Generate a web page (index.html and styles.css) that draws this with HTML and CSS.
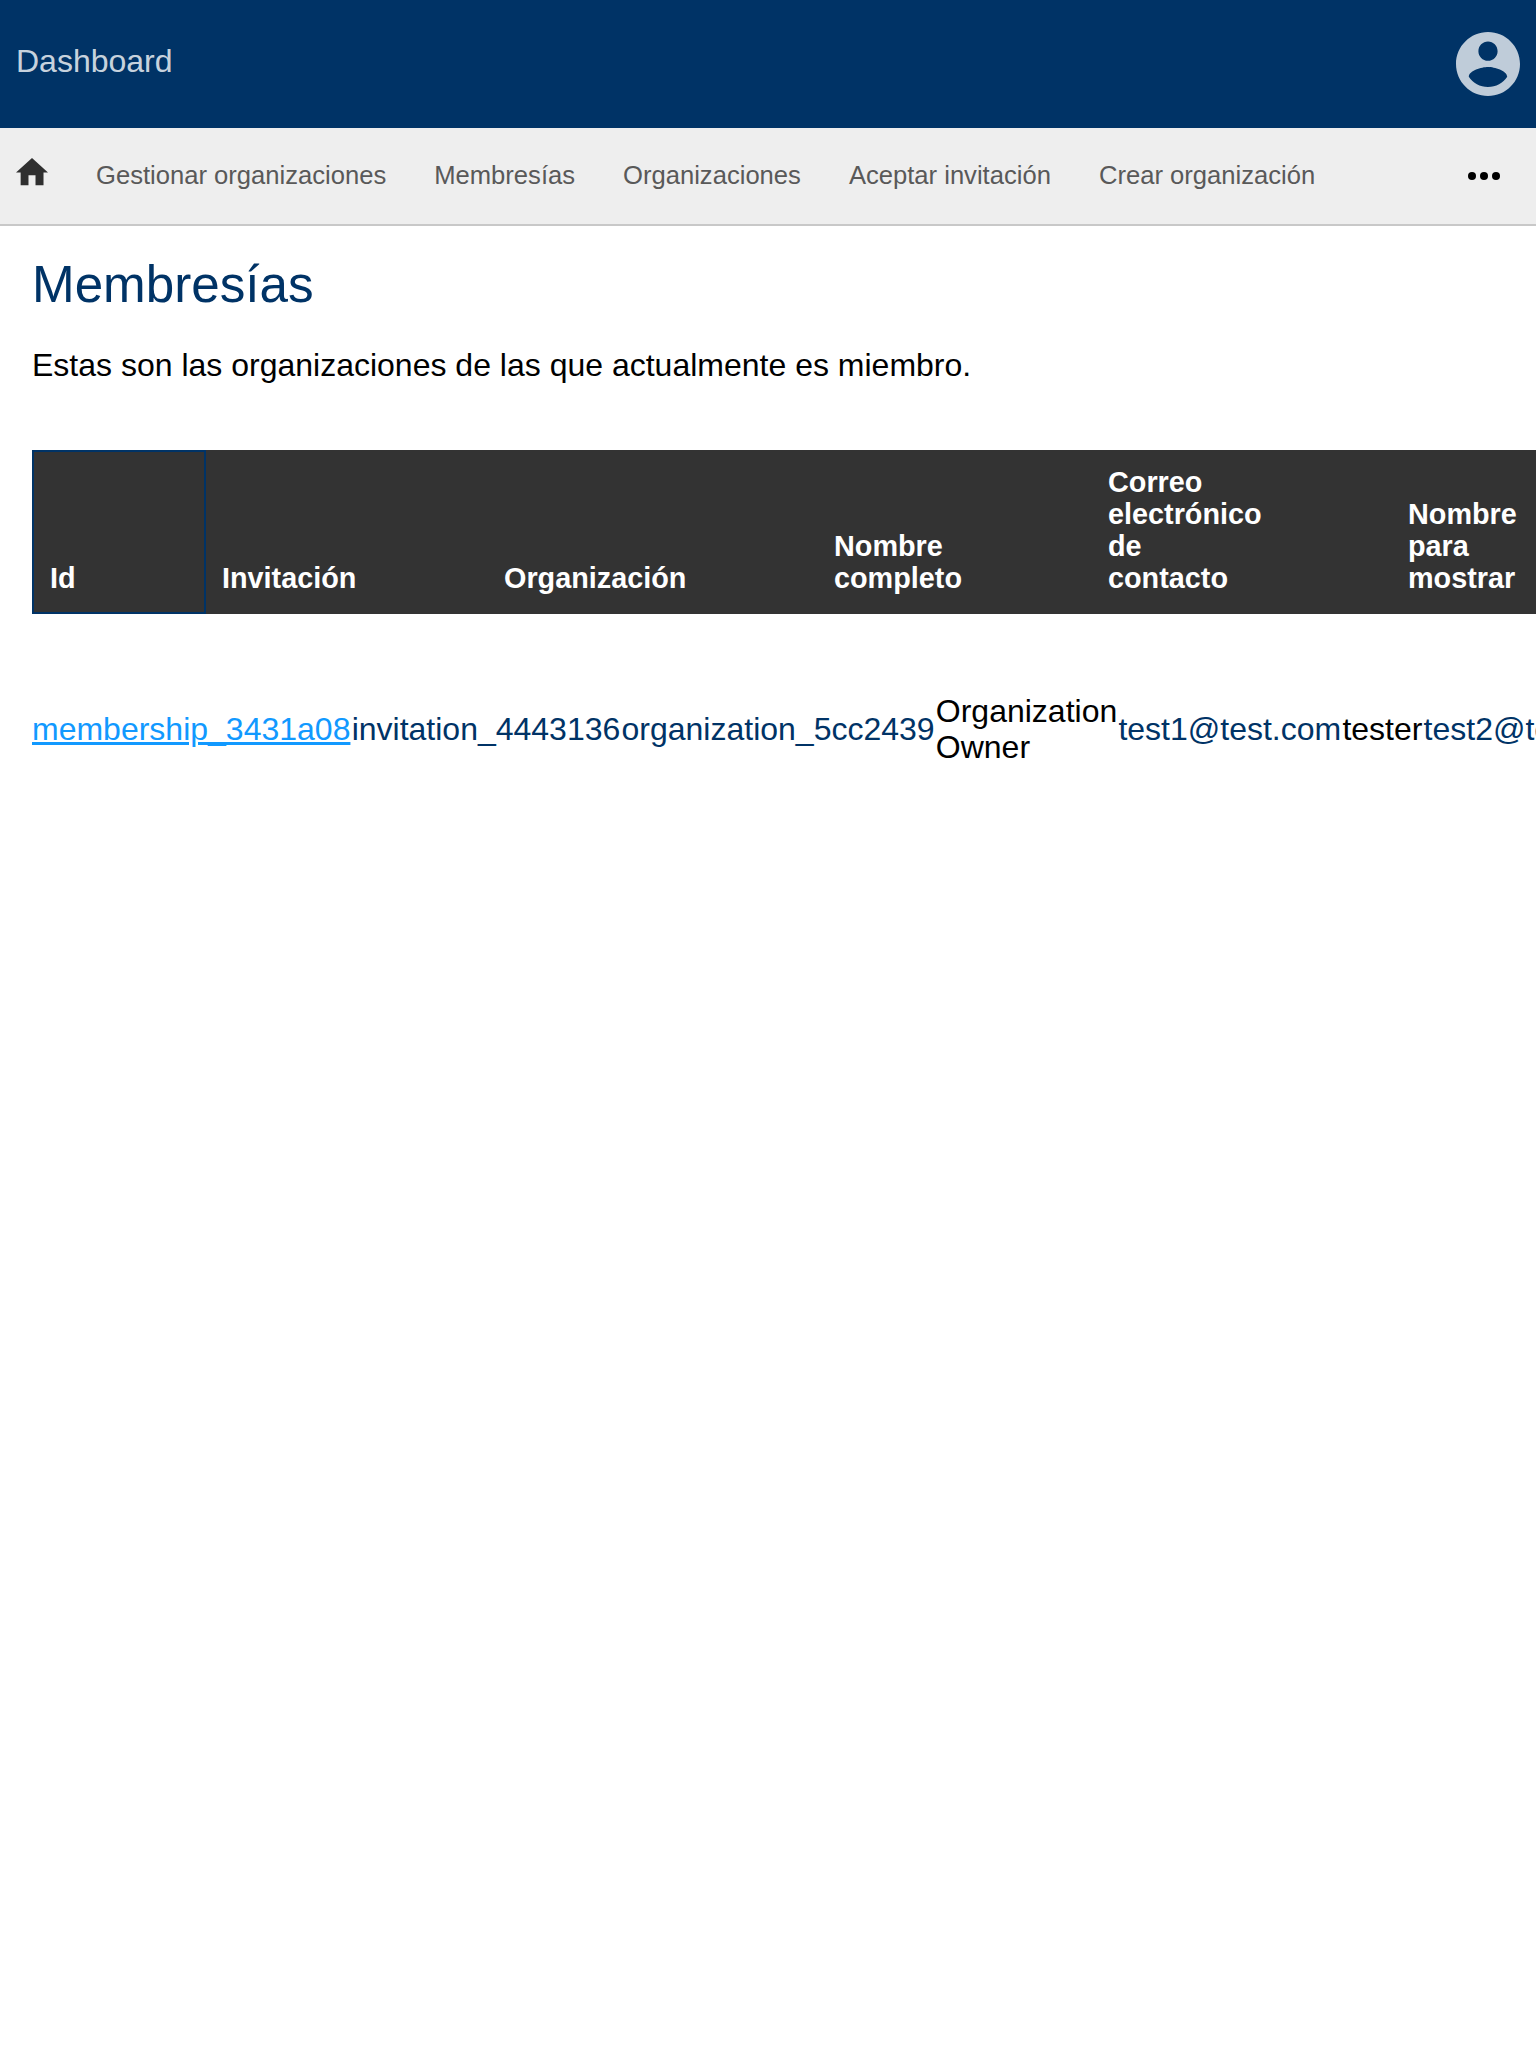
FILE: index.html
```html
<!DOCTYPE html>
<html lang="es">
<head>
<meta charset="utf-8">
<title>Membresías</title>
<link rel="stylesheet" href="styles.css">
</head>
<body>
<header class="topbar">
  <span class="brand">Dashboard</span>
  <svg class="account" viewBox="2 2 20 20"><path d="M12 2C6.48 2 2 6.48 2 12s4.48 10 10 10 10-4.48 10-10S17.52 2 12 2zm0 3c1.66 0 3 1.34 3 3s-1.34 3-3 3-3-1.34-3-3 1.34-3 3-3zm0 14.2c-2.5 0-4.71-1.28-6-3.22.03-1.99 4-3.08 6-3.08 1.99 0 5.97 1.09 6 3.08-1.29 1.94-3.5 3.22-6 3.22z"/></svg>
</header>
<nav class="nav">
  <svg class="home" viewBox="2 3 20 17"><path d="M9.8 20v-6.2h4.4V20h5v-8H22L12 3 2 12h2.9v8z"/></svg>
  <a class="nav-link">Gestionar organizaciones</a>
  <a class="nav-link">Membresías</a>
  <a class="nav-link">Organizaciones</a>
  <a class="nav-link">Aceptar invitación</a>
  <a class="nav-link">Crear organización</a>
  <svg class="more" viewBox="0 0 32 8"><circle cx="4" cy="4" r="4"/><circle cx="16" cy="4" r="4"/><circle cx="28" cy="4" r="4"/></svg>
</nav>
<main class="content">
  <h1 class="title">Membresías</h1>
  <p class="intro">Estas son las organizaciones de las que actualmente es miembro.</p>
  <div class="table">
    <div class="table-head">
      <div class="th th-active">Id</div>
      <div class="th">Invitación</div>
      <div class="th">Organización</div>
      <div class="th">Nombre<br>completo</div>
      <div class="th">Correo<br>electrónico<br>de<br>contacto</div>
      <div class="th">Nombre<br>para<br>mostrar</div>
    </div>
    <div class="table-row">
      <a class="td link-active">membership_3431a08</a>
      <a class="td link">invitation_4443136</a>
      <a class="td link">organization_5cc2439</a>
      <span class="td">Organization<br>Owner</span>
      <a class="td link">test1@test.com</a>
      <span class="td">tester</span>
      <a class="td link">test2@test.com</a>
    </div>
  </div>
</main>
</body>
</html>
```
FILE: styles.css
```css
* { box-sizing: border-box; }
body {
  margin: 0;
  min-height: 2048px;
  overflow: hidden;
  background: #fff;
  color: #000;
  font: 32px/36px "Liberation Sans", Arial, sans-serif;
}
.topbar {
  display: flex;
  align-items: center;
  justify-content: space-between;
  height: 128px;
  padding: 0 16px;
  background: #003366;
}
.brand { padding-bottom: 6px; color: rgba(255, 255, 255, .8); }
.account { width: 64px; height: 64px; fill: #bfccd9; }
.nav {
  display: flex;
  align-items: center;
  gap: 48px;
  height: 98px;
  padding: 0 36px 0 16px;
  background: #eee;
  border-bottom: 2px solid #c8c8c8;
}
.home { width: 32px; height: 27.2px; margin-bottom: 8px; fill: #2f2f2f; }
.nav-link { padding-bottom: 2px; color: #595959; font-size: 25.6px; line-height: 30px; white-space: nowrap; }
.more { width: 32px; height: 8px; margin-left: auto; }
.content { padding: 30px 0 0 32px; overflow: hidden; }
.title { margin: 0; color: #003366; font-size: 51.2px; font-weight: 400; line-height: 58px; }
.intro { margin: 33px 0 67px; }
.table-head {
  display: grid;
  grid-template-columns: 174px 282px 330px 274px 300px 1fr;
  height: 164px;
  background: #333;
  color: #fff;
  font-size: 28.8px;
  font-weight: 700;
  line-height: 32px;
}
.th { display: flex; align-items: flex-end; padding: 0 0 20px 16px; }
.th-active { padding: 0 0 18px 16px; border: 2px solid #003366; }
.table-row { display: flex; align-items: center; height: 230px; gap: 1.2px; white-space: nowrap; }
.td { flex: none; }
.link { color: #003366; }
.link-active { color: #1199ff; text-decoration: underline; }
```
